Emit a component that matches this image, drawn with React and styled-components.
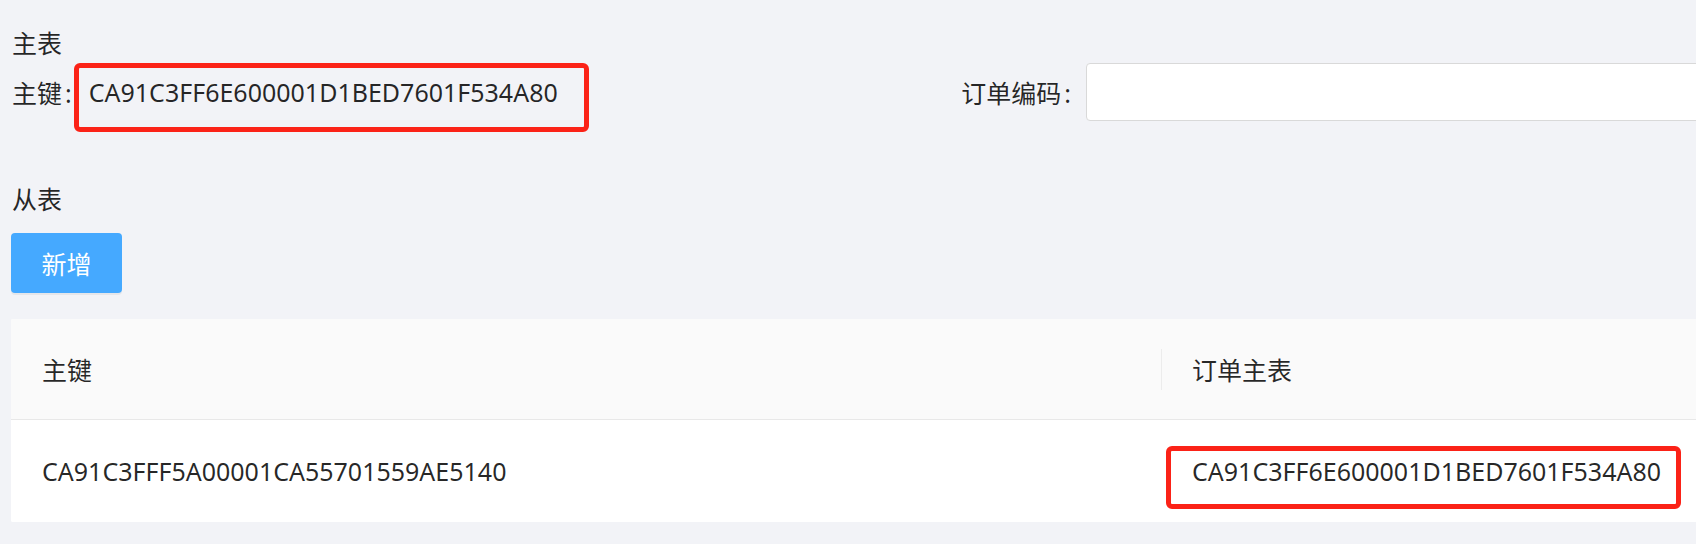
import styled, { createGlobalStyle } from 'styled-components';

const GlobalStyle = createGlobalStyle`
  html, body {
    margin: 0;
    padding: 0;
    background: #f2f3f7;
    overflow: hidden;
  }
  body {
    font-family: 'Noto Sans', 'Noto Sans CJK SC', sans-serif;
    font-size: 25px;
    color: rgba(0, 0, 0, 0.85);
  }
`;

const Page = styled.div`
  box-sizing: border-box;
  width: 2400px;
  padding: 24px 0 0 11px;
`;

const SectionTitle = styled.div`
  height: 38px;
  line-height: 38px;
  margin-top: ${(p) => p.$top || 0}px;
  padding-left: 1px;
`;

const FormRow = styled.div`
  display: flex;
  align-items: center;
  height: 58px;
  margin-top: 1px;
`;

const FormItem = styled.div`
  display: flex;
  align-items: center;
  flex: ${(p) => (p.$width ? `0 0 ${p.$width}px` : '1')};
`;

const Label = styled.label`
  box-sizing: border-box;
  padding-left: 1px;
  white-space: nowrap;
  text-align: ${(p) => (p.$align || 'left')};
  width: ${(p) => (p.$width ? `${p.$width}px` : 'auto')};
  &::after {
    content: ':';
    margin: 0 2px 0 3px;
  }
`;

const Value = styled.span`
  position: relative;
  display: inline-block;
  line-height: 34px;
  margin-left: ${(p) => p.$gap || 0}px;
`;

const Mark = styled.span`
  position: absolute;
  top: ${(p) => p.$t}px;
  left: ${(p) => p.$l}px;
  right: ${(p) => p.$r}px;
  bottom: ${(p) => p.$b}px;
  border: 5px solid #fb2217;
  border-radius: 6px;
  pointer-events: none;
`;

const Input = styled.input`
  box-sizing: border-box;
  width: 900px;
  height: 58px;
  margin-left: 13px;
  border: 1px solid #d9d9d9;
  border-radius: 4px;
  background: #fff;
  font: inherit;
  outline: none;
`;

const AddButton = styled.button`
  display: block;
  width: 111px;
  height: 60px;
  margin-top: 15px;
  border: none;
  border-radius: 4px;
  background: #45a9ff;
  color: #fff;
  font: inherit;
  box-shadow: 0 2px 0 rgba(0, 0, 0, 0.05);
  cursor: pointer;
`;

const Table = styled.div`
  margin-top: 26px;
  background: #fff;
  border-radius: 2px;
  overflow: hidden;
`;

const Row = styled.div`
  display: grid;
  grid-template-columns: 1150px 1fr;
  height: ${(p) => (p.$head ? 100 : 102)}px;
  background: ${(p) => (p.$head ? '#fafafa' : '#fff')};
  border-bottom: ${(p) => (p.$head ? '1px solid #e8e8e8' : 'none')};
`;

const Cell = styled.div`
  position: relative;
  display: flex;
  align-items: center;
  padding-left: 31px;
  ${(p) => p.$divider && `
    &::before {
      content: '';
      position: absolute;
      left: 0;
      top: 30px;
      bottom: 29px;
      width: 1px;
      background: #ececec;
    }
  `}
`;

export default function App() {
  const masterKey = 'CA91C3FF6E600001D1BED7601F534A80';

  return (
    <Page>
      <GlobalStyle />
      <SectionTitle>主表</SectionTitle>
      <FormRow>
        <FormItem $width={857}>
          <Label>主键</Label>
          <Value $gap={15}>
            {masterKey}
            <Mark $t={-12} $l={-15} $r={-31} $b={-23} />
          </Value>
        </FormItem>
        <FormItem>
          <Label $width={205} $align="right">订单编码</Label>
          <Input type="text" />
        </FormItem>
      </FormRow>

      <SectionTitle $top={59}>从表</SectionTitle>
      <AddButton>新增</AddButton>

      <Table>
        <Row $head>
          <Cell>主键</Cell>
          <Cell $divider>订单主表</Cell>
        </Row>
        <Row>
          <Cell>CA91C3FFF5A00001CA55701559AE5140</Cell>
          <Cell>
            <Value>
              {masterKey}
              <Mark $t={-8} $l={-26} $r={-20} $b={-21} />
            </Value>
          </Cell>
        </Row>
      </Table>
    </Page>
  );
}
